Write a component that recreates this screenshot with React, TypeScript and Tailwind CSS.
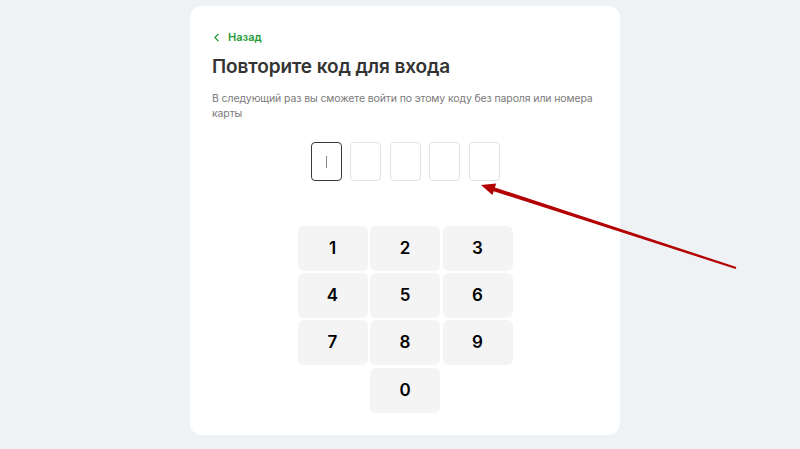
import { ChevronLeft } from 'lucide-react';

const keys = ['1', '2', '3', '4', '5', '6', '7', '8', '9'];

export default function App() {
  return (
    <div className="relative h-[449px] bg-[#eff2f5] pt-[6px] font-['Inter',sans-serif] overflow-hidden">
      <div className="ml-[190px] w-[430px] h-[429px] rounded-[12px] bg-white px-[22px] pt-[24px]">
        {/* Back link */}
        <button className="flex items-center gap-[5px] text-[#1f9a38] text-[11px] font-semibold leading-[14px]">
          <ChevronLeft size={13} strokeWidth={2.2} className="-ml-[2px]" />
          Назад
        </button>

        <h1 className="mt-[10px] text-[19px] leading-[26px] font-semibold text-[#333] tracking-[-0.1px]">
          Повторите код для входа
        </h1>

        <p className="mt-[11px] text-[10.5px] leading-[15px] text-[#7a7a7a] tracking-[-0.12px]">
          В следующий раз вы сможете войти по этому коду без пароля или номера карты
        </p>

        {/* Code cells */}
        <div className="mt-[21px] flex justify-center gap-[8.5px]">
          {[0, 1, 2, 3, 4].map((i) => (
            <div
              key={i}
              className={`w-[31px] h-[39px] rounded-[4px] flex items-center justify-center ${
                i === 0 ? 'border-[1.5px] border-[#3a3a3a]' : 'border border-[#e3e3e3]'
              }`}
            >
              {i === 0 && <span className="block w-px h-[12px] bg-[#8a8a8a]" />}
            </div>
          ))}
        </div>

        {/* Keypad */}
        <div className="mt-[45px] mx-auto w-[215px] grid grid-cols-3 gap-x-[2.5px] gap-y-[2px]">
          {keys.map((k) => (
            <button
              key={k}
              className="h-[45px] rounded-[6px] bg-[#f4f4f5] text-[17px] font-semibold text-black"
            >
              {k}
            </button>
          ))}
          <div />
          <button className="h-[45px] mt-[1px] rounded-[6px] bg-[#f4f4f5] text-[17px] font-semibold text-black">
            0
          </button>
        </div>
      </div>

      {/* Annotation arrow */}
      <svg className="absolute left-0 top-0 pointer-events-none" width="800" height="449">
        <polygon points="489,189.7 490.2,185.9 736.3,267 735.7,269" fill="#b30000" />
        <polygon points="481,185 496.2,183.6 492.4,195" fill="#b30000" />
      </svg>
    </div>
  );
}
